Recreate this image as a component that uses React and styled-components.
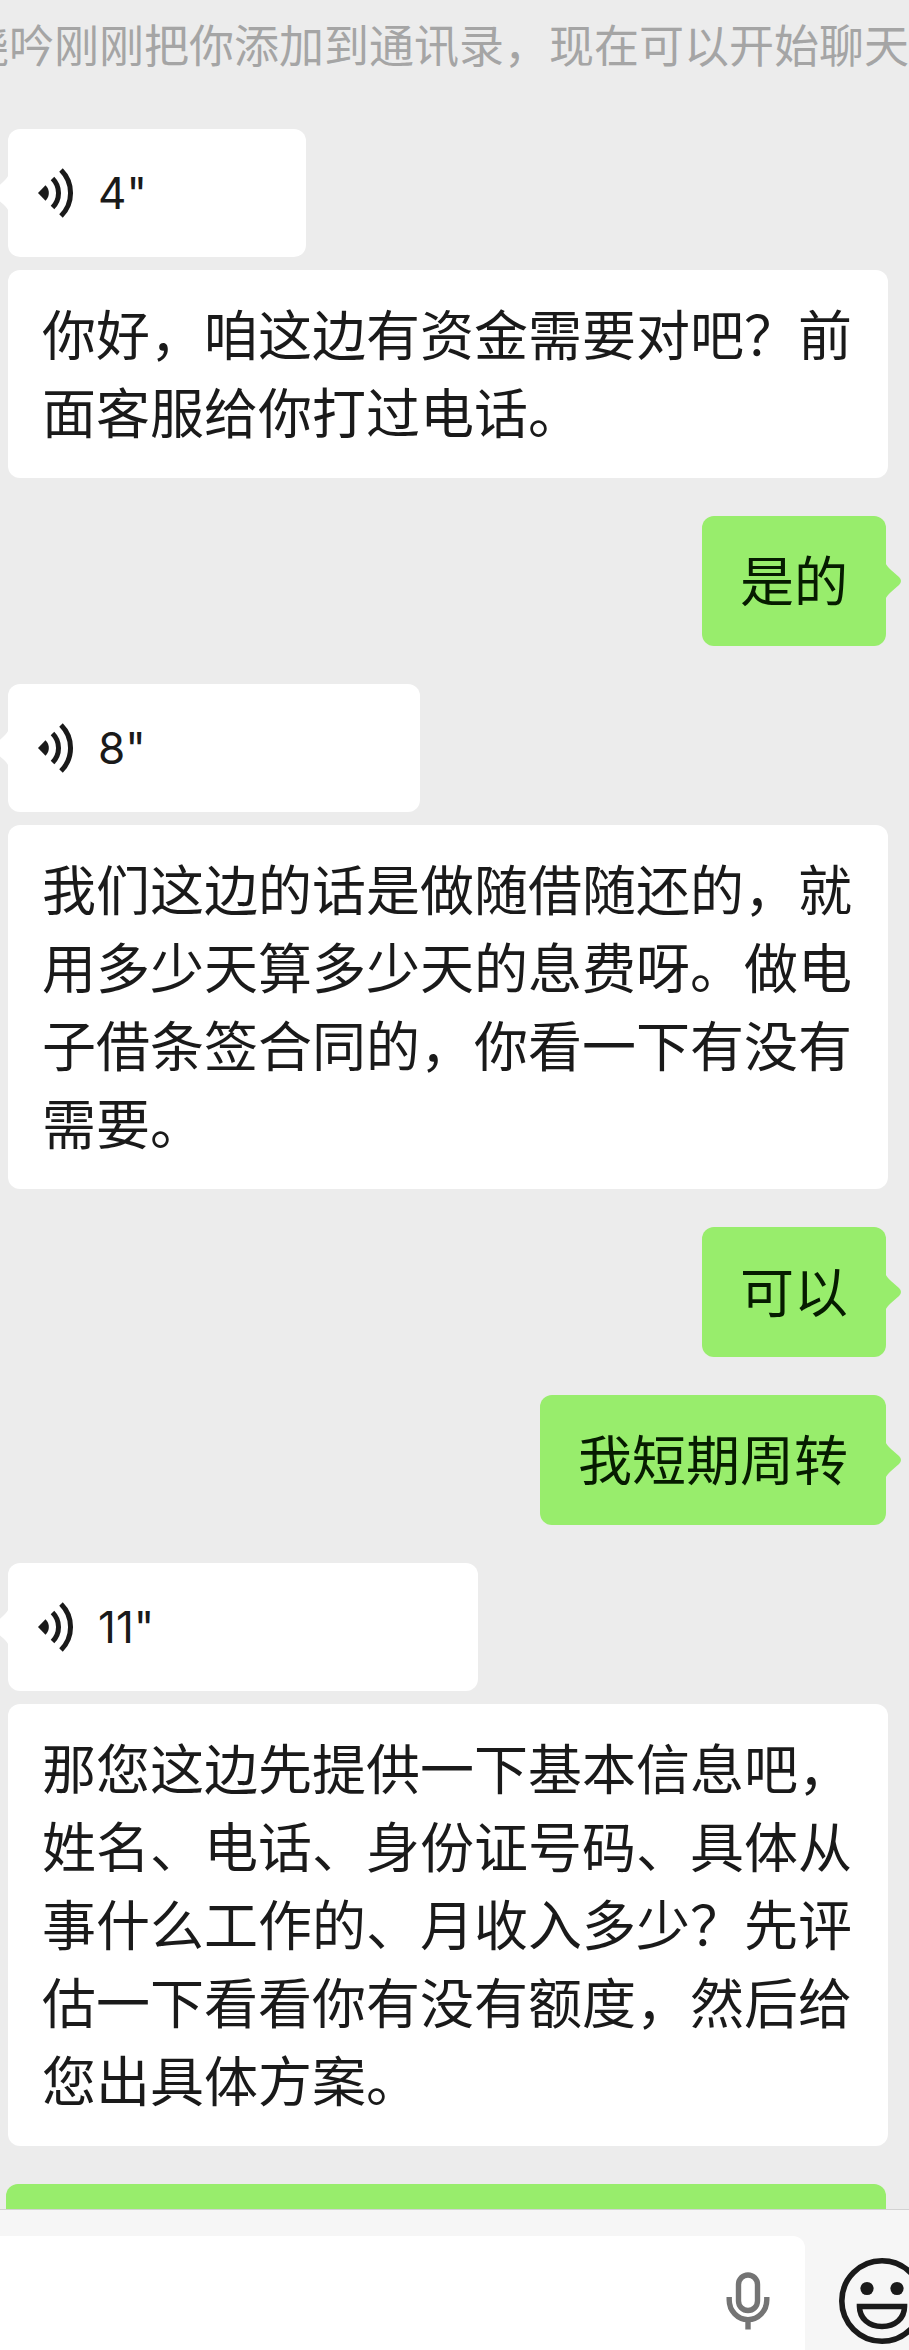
import styled, { createGlobalStyle } from "styled-components";

const GlobalStyle=createGlobalStyle`
    *{
        box-sizing: border-box;
    }
    body{
        margin: 0;
        background: #ececec;
        font-family: "Noto Sans CJK SC", sans-serif;
        color: #1a1a1a;
    }
    button{
        border: none;
        padding: 0;
        background: none;
        color: inherit;
        font-family: inherit;
        cursor: pointer;
    }
`

const messages=[
    { type: 'voice', seconds: 4, length: 298, text: '你好，咱这边有资金需要对吧？前面客服给你打过电话。' },
    { type: 'mine', text: '是的' },
    { type: 'voice', seconds: 8, length: 412, text: '我们这边的话是做随借随还的，就用多少天算多少天的息费呀。做电子借条签合同的，你看一下有没有需要。' },
    { type: 'mine', text: '可以' },
    { type: 'mine', text: '我短期周转' },
    { type: 'voice', seconds: 11, length: 470, text: '那您这边先提供一下基本信息吧，姓名、电话、身份证号码、具体从事什么工作的、月收入多少？先评估一下看看你有没有额度，然后给您出具体方案。' },
]

const VoiceIcon=()=>(
    <svg width="36" height="52" viewBox="0 0 36 52" fill="none" stroke="#1a1a1a" strokeWidth="5" aria-hidden="true">
        <path d="M0 26 L7.5 18.2 A10.8 10.8 0 0 1 7.5 33.8 Z" fill="#1a1a1a" stroke="none"/>
        <path d="M14.5 11.5 A20.5 20.5 0 0 1 14.5 40.5"/>
        <path d="M23 3 A32.5 32.5 0 0 1 23 49"/>
    </svg>
)

const MicIcon=()=>(
    <svg width="44" height="58" viewBox="0 0 44 58" fill="none" stroke="#747474" strokeWidth="5.4" aria-hidden="true">
        <rect x="12.5" y="3" width="19" height="35.5" rx="9.5"/>
        <path d="M3.2 25 V28 A18.8 19.6 0 0 0 40.8 28 V25"/>
        <path d="M22 48 V57.5"/>
    </svg>
)

const SmileIcon=()=>(
    <svg width="86" height="86" viewBox="0 0 86 86" fill="none" stroke="#1a1a1a" strokeWidth="5.6" aria-hidden="true">
        <circle cx="43" cy="43" r="40.2"/>
        <circle cx="28" cy="30.5" r="6.6" fill="#1a1a1a" stroke="none"/>
        <circle cx="58" cy="30.5" r="6.6" fill="#1a1a1a" stroke="none"/>
        <path d="M20.5 48.5 H65.5 C65.5 60.5 56 68.5 43 68.5 C30 68.5 20.5 60.5 20.5 48.5 Z"/>
    </svg>
)

const App=()=>{
    return(
        <Screen>
            <GlobalStyle/>
            <Chat>
                <Notice>晓吟刚刚把你添加到通讯录，现在可以开始聊天</Notice>
                <Messages>
                    {messages.map((message)=>(
                        message.type==='voice' ? (
                            <Received key={message.text}>
                                <Voice $length={message.length}>
                                    <VoiceIcon/>
                                    <Tail viewBox="0 0 16 38" $side="left">
                                        <path d="M16 0 C15 3 13 5 10 8 L2 15 Q-2 19 2 23 L10 30 C13 33 15 35 16 38 Z"/>
                                    </Tail>
                                    <Seconds>{message.seconds}"</Seconds>
                                </Voice>
                                <Transcript>{message.text}</Transcript>
                            </Received>
                        ) : (
                            <Sent key={message.text}>
                                {message.text}
                                <Tail viewBox="0 0 16 38" $side="right">
                                    <path d="M0 0 C1 3 3 5 6 8 L14 15 Q18 19 14 23 L6 30 C3 33 1 35 0 38 Z"/>
                                </Tail>
                            </Sent>
                        )
                    ))}
                    <SentLong/>
                </Messages>
            </Chat>
            <Footer>
                <Field>
                    <Input type="text" aria-label="消息"/>
                    <IconButton type="button" aria-label="语音输入">
                        <MicIcon/>
                    </IconButton>
                </Field>
                <EmojiButton type="button" aria-label="表情">
                    <SmileIcon/>
                </EmojiButton>
            </Footer>
        </Screen>
    )
}


const Screen=styled.div`
    display: flex;
    flex-direction: column;
    height: 100vh;
    overflow: hidden;
`

const Chat=styled.main`
    flex: 1;
    min-height: 0;
    overflow: hidden;
`

const Notice=styled.p`
    margin: 0;
    padding: 12px 0 53px;
    font-size: 45px;
    line-height: 64px;
    white-space: nowrap;
    text-indent: -36px;
    overflow: hidden;
    color: #a5a5a5;
`

const Messages=styled.div`
    display: flex;
    flex-direction: column;
    gap: 38px;
    padding: 0 21px 0 8px;
`

const Received=styled.div`
    display: flex;
    flex-direction: column;
    align-items: flex-start;
    gap: 13px;
`

const Bubble=styled.div`
    position: relative;
    border-radius: 12px;
    font-size: 54px;
    line-height: 78px;
`

const Voice=styled(Bubble).attrs({ as: 'button', type: 'button' })`
    display: flex;
    align-items: center;
    gap: 24px;
    width: ${(props)=>props.$length}px;
    max-width: 100%;
    height: 128px;
    padding: 0 30px;
    background: #fff;
`

const Seconds=styled.span`
    font-family: Inter, sans-serif;
    font-size: 44px;
    line-height: 64px;
`

const Transcript=styled(Bubble)`
    width: 100%;
    padding: 24px 34px 28px;
    background: #fff;
`

const Sent=styled(Bubble)`
    align-self: flex-end;
    margin-right: 2px;
    padding: 24px 38px 28px;
    background: #98ed6c;
    color: #061c00;
`

const SentLong=styled(Bubble)`
    height: 130px;
    margin: 0 2px 0 -2px;
    background: #98ed6c;
`

const Tail=styled.svg`
    position: absolute;
    top: 50%;
    ${(props)=>props.$side}: -15px;
    width: 16px;
    height: 38px;
    margin-top: -19px;
    fill: ${(props)=>props.$side==='left' ? '#fff' : '#98ed6c'};
`

const Footer=styled.footer`
    display: flex;
    flex: none;
    gap: 34px;
    height: 141px;
    padding-top: 26px;
    border-top: 1px solid #d2d2d2;
    background: #f6f6f6;
    overflow: hidden;
`

const Field=styled.div`
    display: flex;
    align-items: center;
    flex: 1;
    min-width: 0;
    height: 130px;
    padding-right: 35px;
    border-radius: 0 12px 12px 0;
    background: #fff;
`

const Input=styled.input`
    flex: 1;
    min-width: 0;
    height: 100%;
    padding: 0 34px;
    border: none;
    outline: none;
    background: transparent;
    font-family: inherit;
    font-size: 54px;
`

const IconButton=styled.button`
    display: flex;
    align-items: center;
    flex: none;
`

const EmojiButton=styled(IconButton)`
    height: 130px;
    margin-right: -16px;
`

export default App
